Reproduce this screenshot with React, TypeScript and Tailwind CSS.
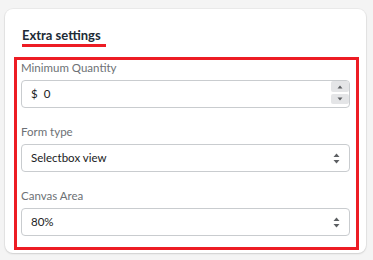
import React from "react";

function UpDown() {
  return (
    <svg width="7" height="11" viewBox="0 0 7 11" className="block">
      <path d="M3.5 0.5 L6.5 4 H0.5 Z" fill="#5c5f62" />
      <path d="M3.5 10.5 L6.5 7 H0.5 Z" fill="#5c5f62" />
    </svg>
  );
}

function Label({ children }: { children: React.ReactNode }) {
  return (
    <div className="h-[16px] text-[11.5px] leading-[16px] text-[#6d7175]">{children}</div>
  );
}

function SelectBox({ value }: { value: string }) {
  return (
    <div className="mt-[4px] flex h-[28px] items-center justify-between rounded-[4px] border border-[#c9cccf] bg-white pl-[9px] pr-[9px] text-[11.5px] text-[#202223]">
      <span>{value}</span>
      <UpDown />
    </div>
  );
}

export default function App() {
  return (
    <div
      className="min-h-[260px] bg-[#f4f4f4] pl-[5px] pt-[9px]"
      style={{ fontFamily: 'Lato, "Noto Sans", sans-serif' }}
    >
      <div className="h-[244px] w-[361px] rounded-[8px] bg-white pt-[16px] shadow-[0_0_0_1px_rgba(0,0,0,0.04),0_1px_2px_rgba(0,0,0,0.12)]">
        <div className="pl-[17px]">
          <div className="h-[19px] text-[13px] font-bold leading-[20px] text-[#212b36]">
            Extra settings
          </div>
          <div className="h-[3px] w-[84px] bg-[#ed1c24]" />
        </div>
        <div className="ml-[9px] mr-[7px] mt-[10px] border-[3px] border-[#ed1c24] pb-[11px] pl-[4px] pr-[6px]">
          <Label>Minimum Quantity</Label>
          <div className="mt-[4px] flex h-[28px] items-center justify-between rounded-[4px] border border-[#c9cccf] bg-white pl-[9px] text-[11.5px] text-[#202223]">
            <div className="flex items-center">
              <span className="mr-[6px]">$</span>
              <span>0</span>
            </div>
            <div className="flex flex-col gap-[2px] self-start">
              <div className="flex h-[11px] w-[18px] items-center justify-center rounded-[2px] bg-[#e4e5e7]">
                <svg width="6" height="4" viewBox="0 0 6 4" className="block">
                  <path d="M3 0.5 L5.5 3.5 H0.5 Z" fill="#5c5f62" />
                </svg>
              </div>
              <div className="flex h-[10px] w-[18px] items-center justify-center rounded-[2px] bg-[#e4e5e7]">
                <svg width="6" height="4" viewBox="0 0 6 4" className="block">
                  <path d="M3 3.5 L5.5 0.5 H0.5 Z" fill="#5c5f62" />
                </svg>
              </div>
            </div>
          </div>
          <div className="mt-[16px]">
            <Label>Form type</Label>
            <SelectBox value="Selectbox view" />
          </div>
          <div className="mt-[16px]">
            <Label>Canvas Area</Label>
            <SelectBox value="80%" />
          </div>
        </div>
      </div>
    </div>
  );
}
